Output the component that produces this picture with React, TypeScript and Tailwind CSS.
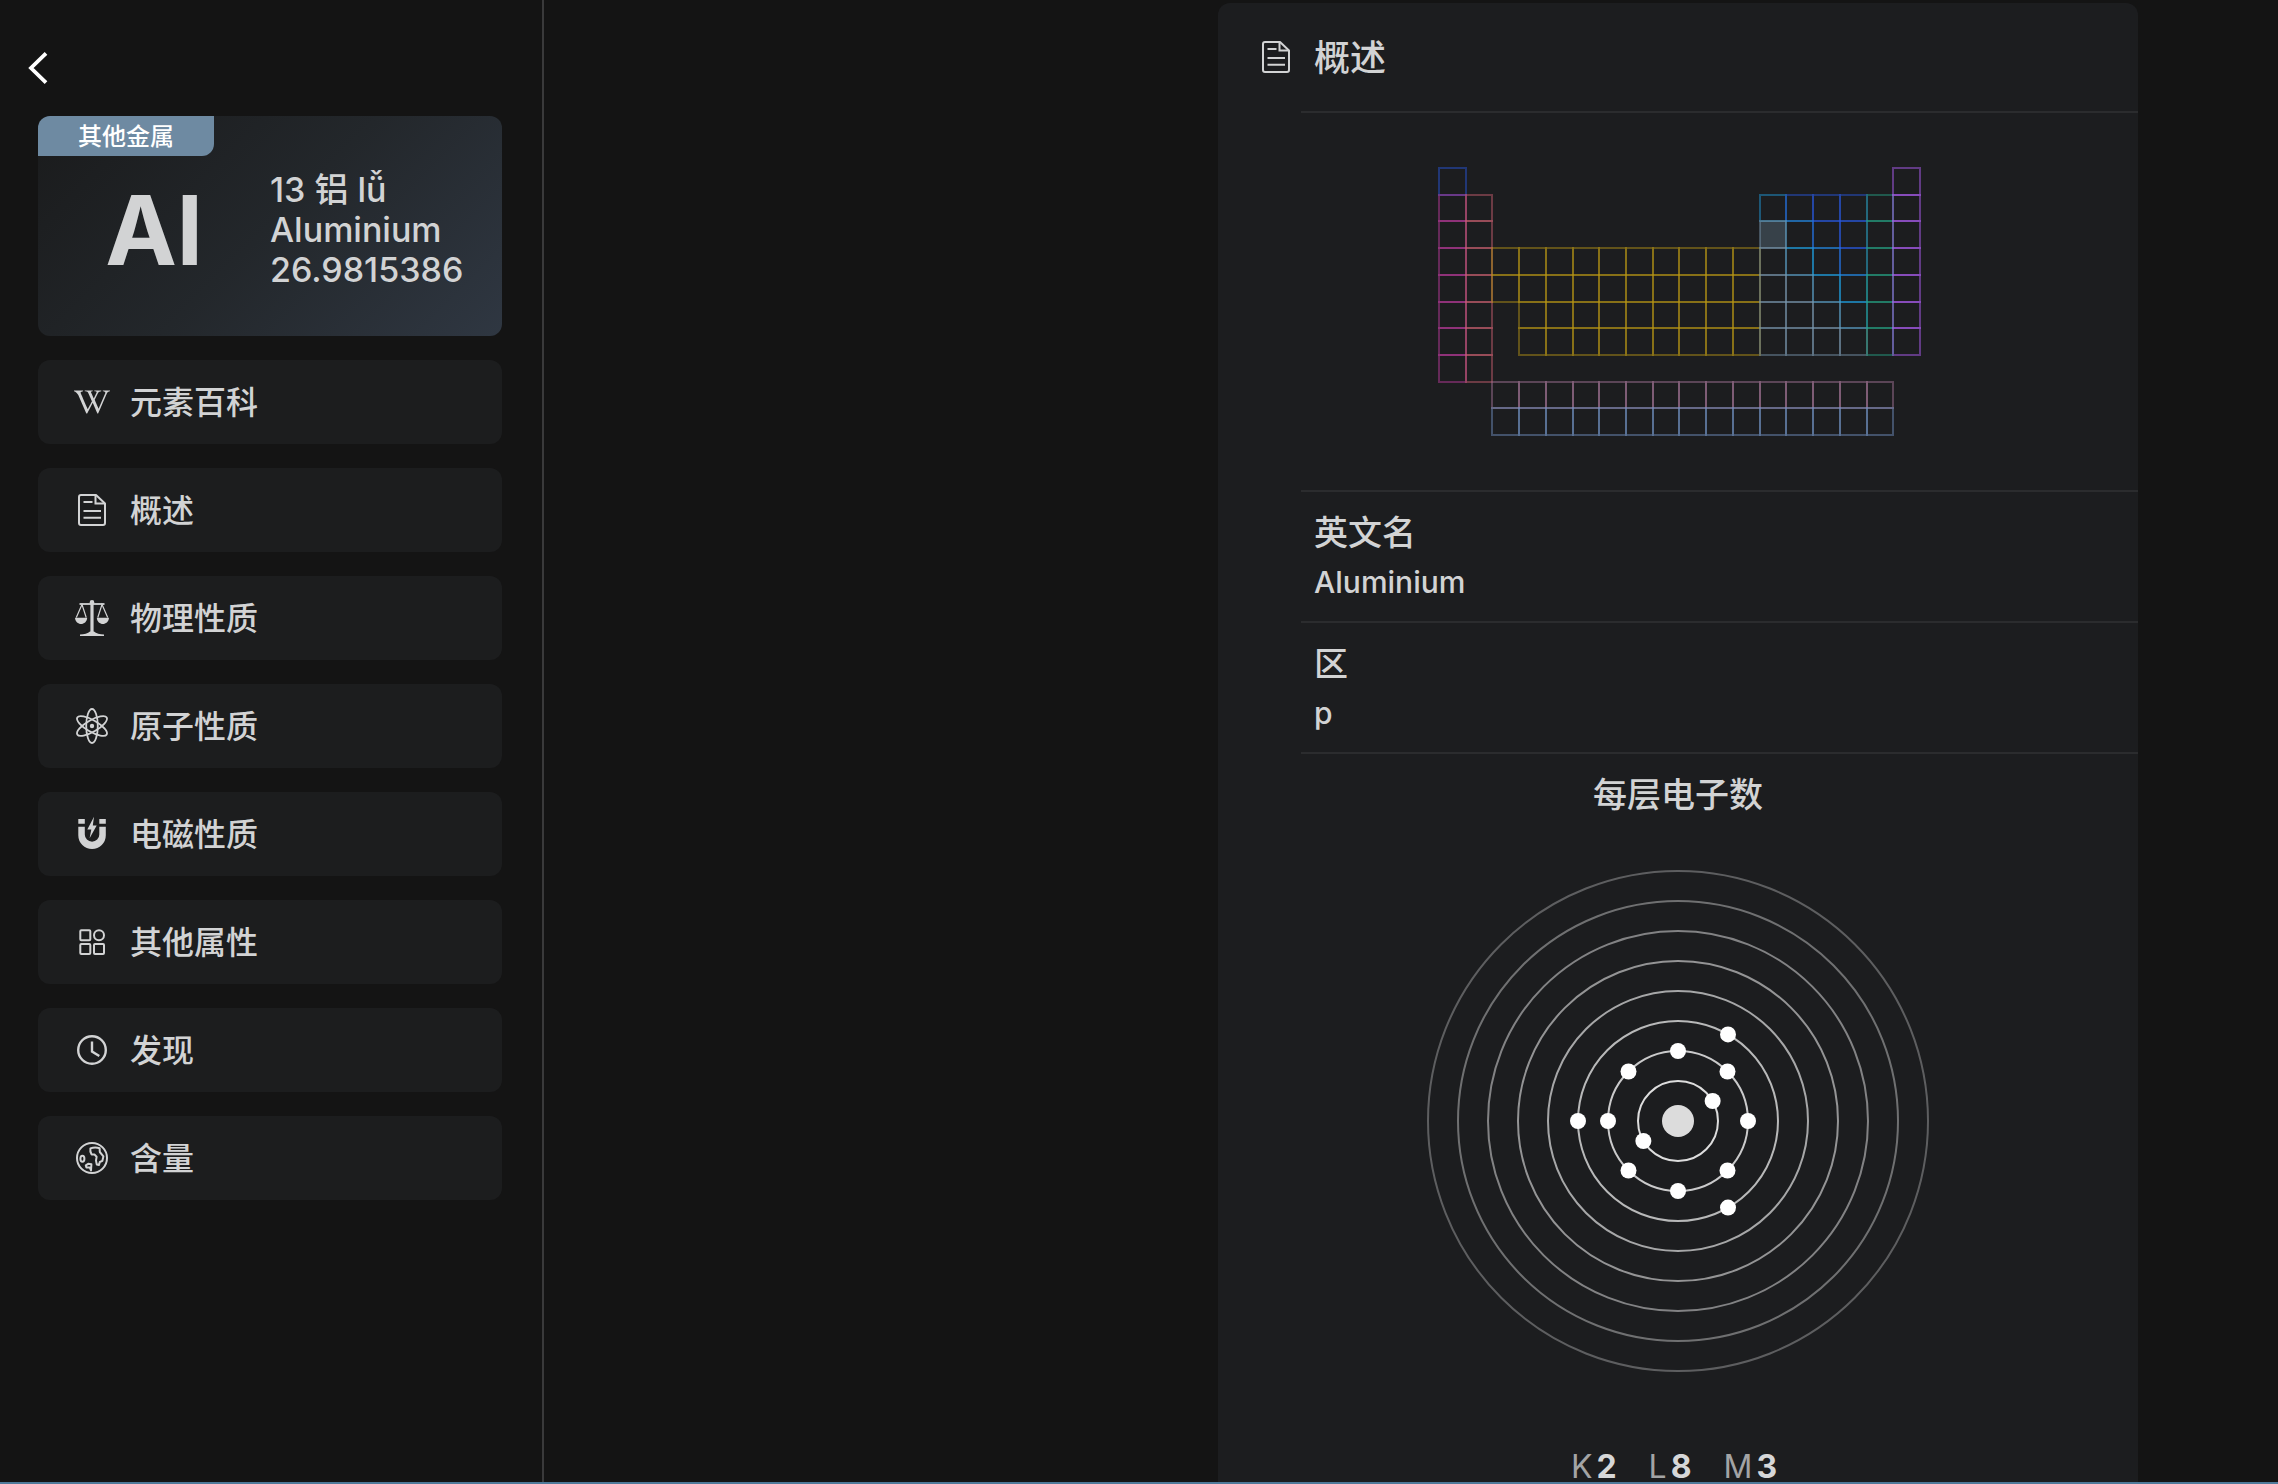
import React from "react";
import { FaWikipediaW } from "react-icons/fa";

type IconProps = { children: React.ReactNode };

function Icon({ children }: IconProps) {
  return (
    <svg viewBox="0 0 36 36" className="size-9 shrink-0" fill="none" stroke="currentColor" strokeWidth="2" aria-hidden="true">
      {children}
    </svg>
  );
}

function DocumentIcon() {
  return (
    <Icon>
      <path d="M7 3H22L31 11.5V31Q31 33 29 33H7Q5 33 5 31V5Q5 3 7 3Z" strokeLinejoin="round" />
      <path d="M21.5 3.5V11.5H30.5M9.5 10H18.5M9.5 19H27M9.5 25.7H27" />
    </Icon>
  );
}

function ScaleIcon() {
  return (
    <Icon>
      <circle cx="18" cy="2.4" r="2.3" fill="currentColor" stroke="none" />
      <path d="M16.4 3H19.6V32.3H16.4Z" fill="currentColor" stroke="none" />
      <path d="M5.5 4H30.5" strokeWidth="1.8" />
      <path d="M2.3 17.5L8 4.5L12.2 17.5M23.8 17.5L28 4.5L33.7 17.5" strokeWidth="1.2" />
      <path d="M1 17.7H13.2C12.6 26 1.6 26 1 17.7ZM22.8 17.7H35C34.4 26 23.4 26 22.8 17.7Z" fill="currentColor" stroke="none" />
      <path d="M6 36V34.6C10 34 14 33.4 16 31.4H20C22 33.4 26 34 30 34.6V36Z" fill="currentColor" stroke="none" />
    </Icon>
  );
}

function AtomIcon() {
  return (
    <Icon>
      <g strokeWidth="1.8">
        <ellipse cx="18" cy="18" rx="5.8" ry="17" />
        <ellipse cx="18" cy="18" rx="5.8" ry="17" transform="rotate(60 18 18)" />
        <ellipse cx="18" cy="18" rx="5.8" ry="17" transform="rotate(-60 18 18)" />
      </g>
      <circle cx="18" cy="18" r="2.2" fill="currentColor" stroke="none" />
    </Icon>
  );
}

function MagnetIcon() {
  return (
    <Icon>
      <path
        d="M4.3 3H10.8V7.7H4.3ZM25.3 3H31.8V7.7H25.3ZM4.3 10.8H10.8V18.4A7.25 7.25 0 0 0 25.3 18.4V10.8H31.8V19.2A13.75 13.75 0 0 1 4.3 19.2ZM20 .7L13.3 13.4H17.3L15.6 22.3L22.7 9.6H18.8Z"
        fill="currentColor"
        stroke="none"
      />
    </Icon>
  );
}

function GridIcon() {
  return (
    <Icon>
      <rect x="6.3" y="6.3" width="10" height="10" rx="1" />
      <circle cx="25" cy="11.3" r="5" />
      <rect x="6.3" y="20" width="10" height="10" rx="1" />
      <rect x="20" y="20" width="10" height="10" rx="1" />
    </Icon>
  );
}

function ClockIcon() {
  return (
    <Icon>
      <circle cx="18" cy="18" r="13.8" strokeWidth="2.4" />
      <path d="M18 9.5V19.5L25.3 24" strokeWidth="2.4" />
    </Icon>
  );
}

function GlobeIcon() {
  return (
    <Icon>
      <circle cx="18" cy="18" r="15" />
      <path
        d="M16.4 8.4Q21 6.6 25.6 8.2L25.8 12L29.4 16.4L28.4 20.8L25.8 22L25 25L22.8 24.6L22 20.6L22.6 16.8L20.4 14.4H17.6Q15.8 11.4 16.4 8.4Z"
        strokeLinejoin="round"
      />
      <ellipse cx="8.4" cy="18.7" rx="2" ry="3" />
      <path d="M11.8 25.4L14.2 23.8L17.4 24.2L17 30.4L15.8 27.6L12.4 27.4Z" strokeLinejoin="round" />
    </Icon>
  );
}

const menu = [
  { label: "元素百科", icon: <FaWikipediaW className="size-9 shrink-0" aria-hidden="true" /> },
  { label: "概述", icon: <DocumentIcon /> },
  { label: "物理性质", icon: <ScaleIcon /> },
  { label: "原子性质", icon: <AtomIcon /> },
  { label: "电磁性质", icon: <MagnetIcon /> },
  { label: "其他属性", icon: <GridIcon /> },
  { label: "发现", icon: <ClockIcon /> },
  { label: "含量", icon: <GlobeIcon /> },
];

function Sidebar() {
  return (
    <aside className="flex w-[544px] shrink-0 flex-col border-r-2 border-[#3a3a3b] pt-[52px]">
      <button type="button" aria-label="返回" className="ml-7 h-8 w-5 text-white">
        <svg viewBox="0 0 20 32" className="h-8 w-5" fill="none" stroke="currentColor" strokeWidth="3.8" aria-hidden="true">
          <path d="M18 1.4L3 16L18 30.6" />
        </svg>
      </button>

      <div className="mt-8 flex flex-col gap-6 pl-[38px] pr-10">
        <section className="relative flex h-[220px] items-center overflow-hidden rounded-xl bg-linear-135 from-[#1a1b1c] via-[#23272b] to-[#2f3742] pt-2">
          <span className="absolute left-0 top-0 flex h-10 w-44 items-center justify-center rounded-br-xl bg-[#6e8aa2] pt-0.5 text-2xl text-white">
            其他金属
          </span>
          <h1 className="w-[232px] text-center text-[96px] leading-none font-bold text-[#d2d3d4]">Al</h1>
          <div className="text-[34px] leading-10 whitespace-nowrap">
            <p>13 铝 lǚ</p>
            <p>Aluminium</p>
            <p>26.9815386</p>
          </div>
        </section>

        <nav className="flex flex-col gap-6">
          {menu.map((item) => (
            <button
              key={item.label}
              type="button"
              className="flex h-[84px] items-center gap-5 rounded-xl bg-[#1c1d1e] px-9 text-left text-[32px]"
            >
              {item.icon}
              <span className="pt-0.5">{item.label}</span>
            </button>
          ))}
        </nav>
      </div>
    </aside>
  );
}

type Block = { color: string; cols: [number, number]; rows: [number, number] };

const blocks: Block[] = [
  { color: "#2858e0", cols: [0, 0], rows: [0, 0] },
  { color: "#c23ba0", cols: [0, 0], rows: [1, 7] },
  { color: "#cf6270", cols: [1, 1], rows: [1, 7] },
  { color: "#b89715", cols: [2, 2], rows: [3, 4] },
  { color: "#b89715", cols: [3, 11], rows: [3, 6] },
  { color: "#20a0e0", cols: [12, 12], rows: [1, 1] },
  { color: "#2858e0", cols: [13, 15], rows: [1, 1] },
  { color: "#20a0e0", cols: [13, 13], rows: [2, 3] },
  { color: "#2858e0", cols: [14, 15], rows: [2, 2] },
  { color: "#7896ad", cols: [12, 12], rows: [2, 6] },
  { color: "#20a0e0", cols: [14, 14], rows: [3, 4] },
  { color: "#2858e0", cols: [15, 15], rows: [3, 3] },
  { color: "#7896ad", cols: [13, 13], rows: [4, 6] },
  { color: "#20a0e0", cols: [15, 15], rows: [4, 5] },
  { color: "#7896ad", cols: [14, 14], rows: [5, 6] },
  { color: "#7896ad", cols: [15, 15], rows: [6, 6] },
  { color: "#26a485", cols: [16, 16], rows: [1, 6] },
  { color: "#b661ff", cols: [17, 17], rows: [0, 6] },
  { color: "#a8789b", cols: [2, 16], rows: [8, 8] },
  { color: "#7394c6", cols: [2, 16], rows: [9, 9] },
];

const edge = (i: number) => Math.round(i * 26.72) + 1;

const cells = blocks.flatMap(({ color, cols, rows }) => {
  const out: { c: number; r: number; color: string }[] = [];
  for (let r = rows[0]; r <= rows[1]; r++) {
    for (let c = cols[0]; c <= cols[1]; c++) out.push({ c, r, color });
  }
  return out;
});

function PeriodicTable() {
  return (
    <svg viewBox="0 0 484 270" className="w-[484px]" fill="none" strokeWidth="2" role="img" aria-label="元素周期表">
      {cells.map(({ c, r, color }) => (
        <rect
          key={`${c}-${r}`}
          x={edge(c)}
          y={edge(r)}
          width={edge(c + 1) - edge(c)}
          height={edge(r + 1) - edge(r)}
          stroke={color}
          strokeOpacity="0.45"
          fill={c === 12 && r === 2 ? "#7896ad" : "none"}
          fillOpacity="0.3"
        />
      ))}
    </svg>
  );
}

const shells = [40, 70, 100, 130, 160, 190, 220, 250];
const electrons = [
  { radius: 40, count: 2, start: -30 },
  { radius: 70, count: 8, start: 0 },
  { radius: 100, count: 3, start: -60 },
];

function ElectronShells() {
  return (
    <svg viewBox="-252 -252 504 504" className="mx-auto w-[504px]" role="img" aria-label="每层电子数">
      {shells.map((r, i) => (
        <circle key={r} r={r} fill="none" stroke="#fff" strokeWidth="2" strokeOpacity={0.85 - i * 0.08} />
      ))}
      <circle r="16" fill="#dcdcdc" />
      {electrons.flatMap(({ radius, count, start }) =>
        Array.from({ length: count }, (_, k) => {
          const a = ((start + (k * 360) / count) * Math.PI) / 180;
          return <circle key={`${radius}-${k}`} cx={radius * Math.cos(a)} cy={radius * Math.sin(a)} r="8" fill="#fff" />;
        })
      )}
    </svg>
  );
}

const details = [
  { name: "英文名", value: "Aluminium" },
  { name: "区", value: "p" },
];

const counts = [
  { shell: "K", n: 2 },
  { shell: "L", n: 8 },
  { shell: "M", n: 3 },
];

function Overview() {
  return (
    <article className="mt-[3px] w-full max-w-[920px] rounded-t-xl bg-[#1c1d1f]">
      <header className="flex h-[108px] items-center gap-5 pl-10">
        <DocumentIcon />
        <h2 className="pt-0.5 text-[36px]">概述</h2>
      </header>
      <div className="ml-[83px] border-t-2 border-[#2b2c2e]" />
      <div className="flex justify-center pb-[53px] pl-[3px] pt-[54px]">
        <PeriodicTable />
      </div>
      <dl className="ml-[83px] border-t-2 border-[#2b2c2e]">
        {details.map((d) => (
          <div key={d.name} className="h-[131px] border-b-2 border-[#2b2c2e] pl-[13px] pt-4">
            <dt className="text-[34px] leading-[50px]">{d.name}</dt>
            <dd className="text-[30px] leading-[48px]">{d.value}</dd>
          </div>
        ))}
      </dl>
      <h3 className="pt-4 text-center text-[34px] leading-[50px]">每层电子数</h3>
      <div className="pt-[49px]">
        <ElectronShells />
      </div>
      <ul className="flex justify-center gap-8 pb-16 pr-2 pt-20 text-[32px] leading-7">
        {counts.map((c) => (
          <li key={c.shell} className="flex gap-1 font-normal text-[#a3a4a5]">
            {c.shell}
            <b className="font-bold text-[#d6d7d8]">{c.n}</b>
          </li>
        ))}
      </ul>
    </article>
  );
}

export default function App() {
  return (
    <div className="flex h-screen flex-col overflow-hidden bg-[#141414] font-['Inter','Noto_Sans_CJK_SC',sans-serif] font-medium text-[#d2d3d4]">
      <div className="flex min-h-0 flex-1">
        <Sidebar />
        <main className="flex min-w-0 flex-1 items-start justify-end overflow-hidden pl-10 pr-[140px]">
          <Overview />
        </main>
      </div>
      <div className="h-[2px] shrink-0 bg-[#4f7a9a]" />
    </div>
  );
}
